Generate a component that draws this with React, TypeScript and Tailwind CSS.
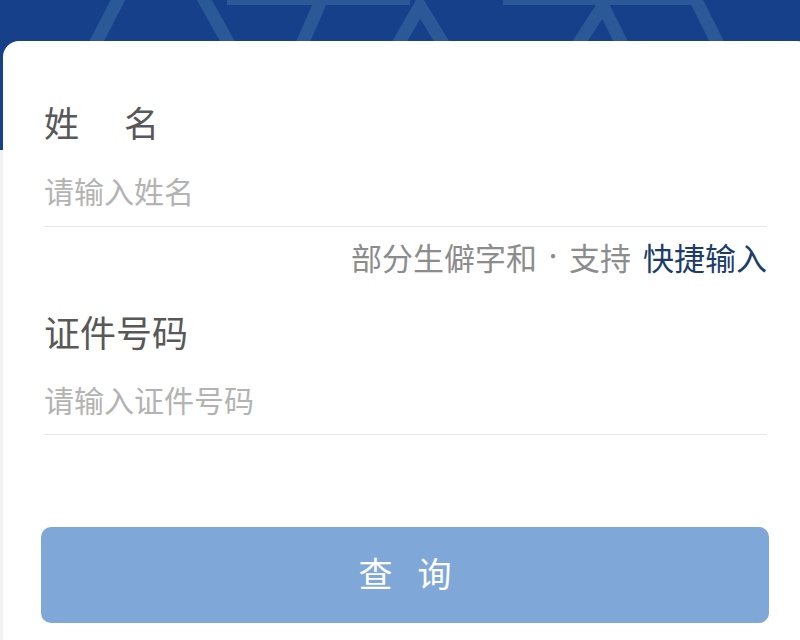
import React from "react";

const cjk = { fontFamily: '"Noto Sans CJK SC", "Noto Sans", sans-serif' };

function HeaderPattern() {
    const stroke = "#2b5897";
    return (
        <svg className="block w-full h-full" viewBox="0 0 800 150" preserveAspectRatio="none">
            <g stroke={stroke} strokeWidth="13" strokeLinecap="butt" fill="none">
                <line x1="121" y1="-6" x2="87" y2="60" />
                <line x1="201" y1="-6" x2="238" y2="60" />
                <line x1="324" y1="-6" x2="295" y2="60" />
                <polyline points="389,60 420,6 453,60" />
                <polyline points="568,60 603,6 630,60" />
                <line x1="693" y1="-6" x2="726" y2="60" />
            </g>
            <rect x="227" y="-6" width="183" height="11" fill={stroke} />
            <rect x="503" y="-6" width="194" height="11" fill={stroke} />
        </svg>
    );
}

export default function App() {
    return (
        <div className="w-[800px] h-[640px] overflow-hidden bg-[#f2f2f2]" style={cjk}>
            <div className="h-[150px] bg-[#16418a]">
                <HeaderPattern />
            </div>

            <div className="relative -mt-[109px] ml-[3px] w-[810px] h-[620px] bg-white rounded-t-[16px] pt-[58px] pl-[41px] pr-[46px]">
                <div className="w-[723px]">
                    {/* 姓名 */}
                    <div className="h-[50px] pb-[6px] flex items-center text-[35px] leading-none text-[#585858]">
                        <span>姓</span>
                        <span className="ml-[45px]">名</span>
                    </div>
                    <div className="mt-[10px] h-[68px] pb-[5px] flex items-center border-b border-[#e6e6e6] text-[30px] leading-none text-[#b3b3b3]">
                        请输入姓名
                    </div>
                    <div className="h-[64px] pb-[6px] flex items-center justify-end text-[31px] leading-none text-[#8c8c8c]">
                        <span>部分生僻字和</span>
                        <span className="mx-[6px] text-[20px]">·</span>
                        <span>支持</span>
                        <span className="ml-[12px] text-[#1c3d6b]">快捷输入</span>
                    </div>

                    {/* 证件号码 */}
                    <div className="mt-[18px] h-[50px] pb-[6px] flex items-center text-[36px] leading-none text-[#585858]">
                        证件号码
                    </div>
                    <div className="mt-[10px] h-[66px] pb-[5px] flex items-center border-b border-[#e6e6e6] text-[30px] leading-none text-[#b3b3b3]">
                        请输入证件号码
                    </div>

                    <button className="mt-[92px] -ml-[3px] w-[728px] h-[96px] pb-[5px] rounded-[10px] bg-[#7fa7d8] text-white text-[34px] leading-none flex items-center justify-center">
                        <span>查</span>
                        <span className="ml-[25px]">询</span>
                    </button>
                </div>
            </div>
        </div>
    );
}
